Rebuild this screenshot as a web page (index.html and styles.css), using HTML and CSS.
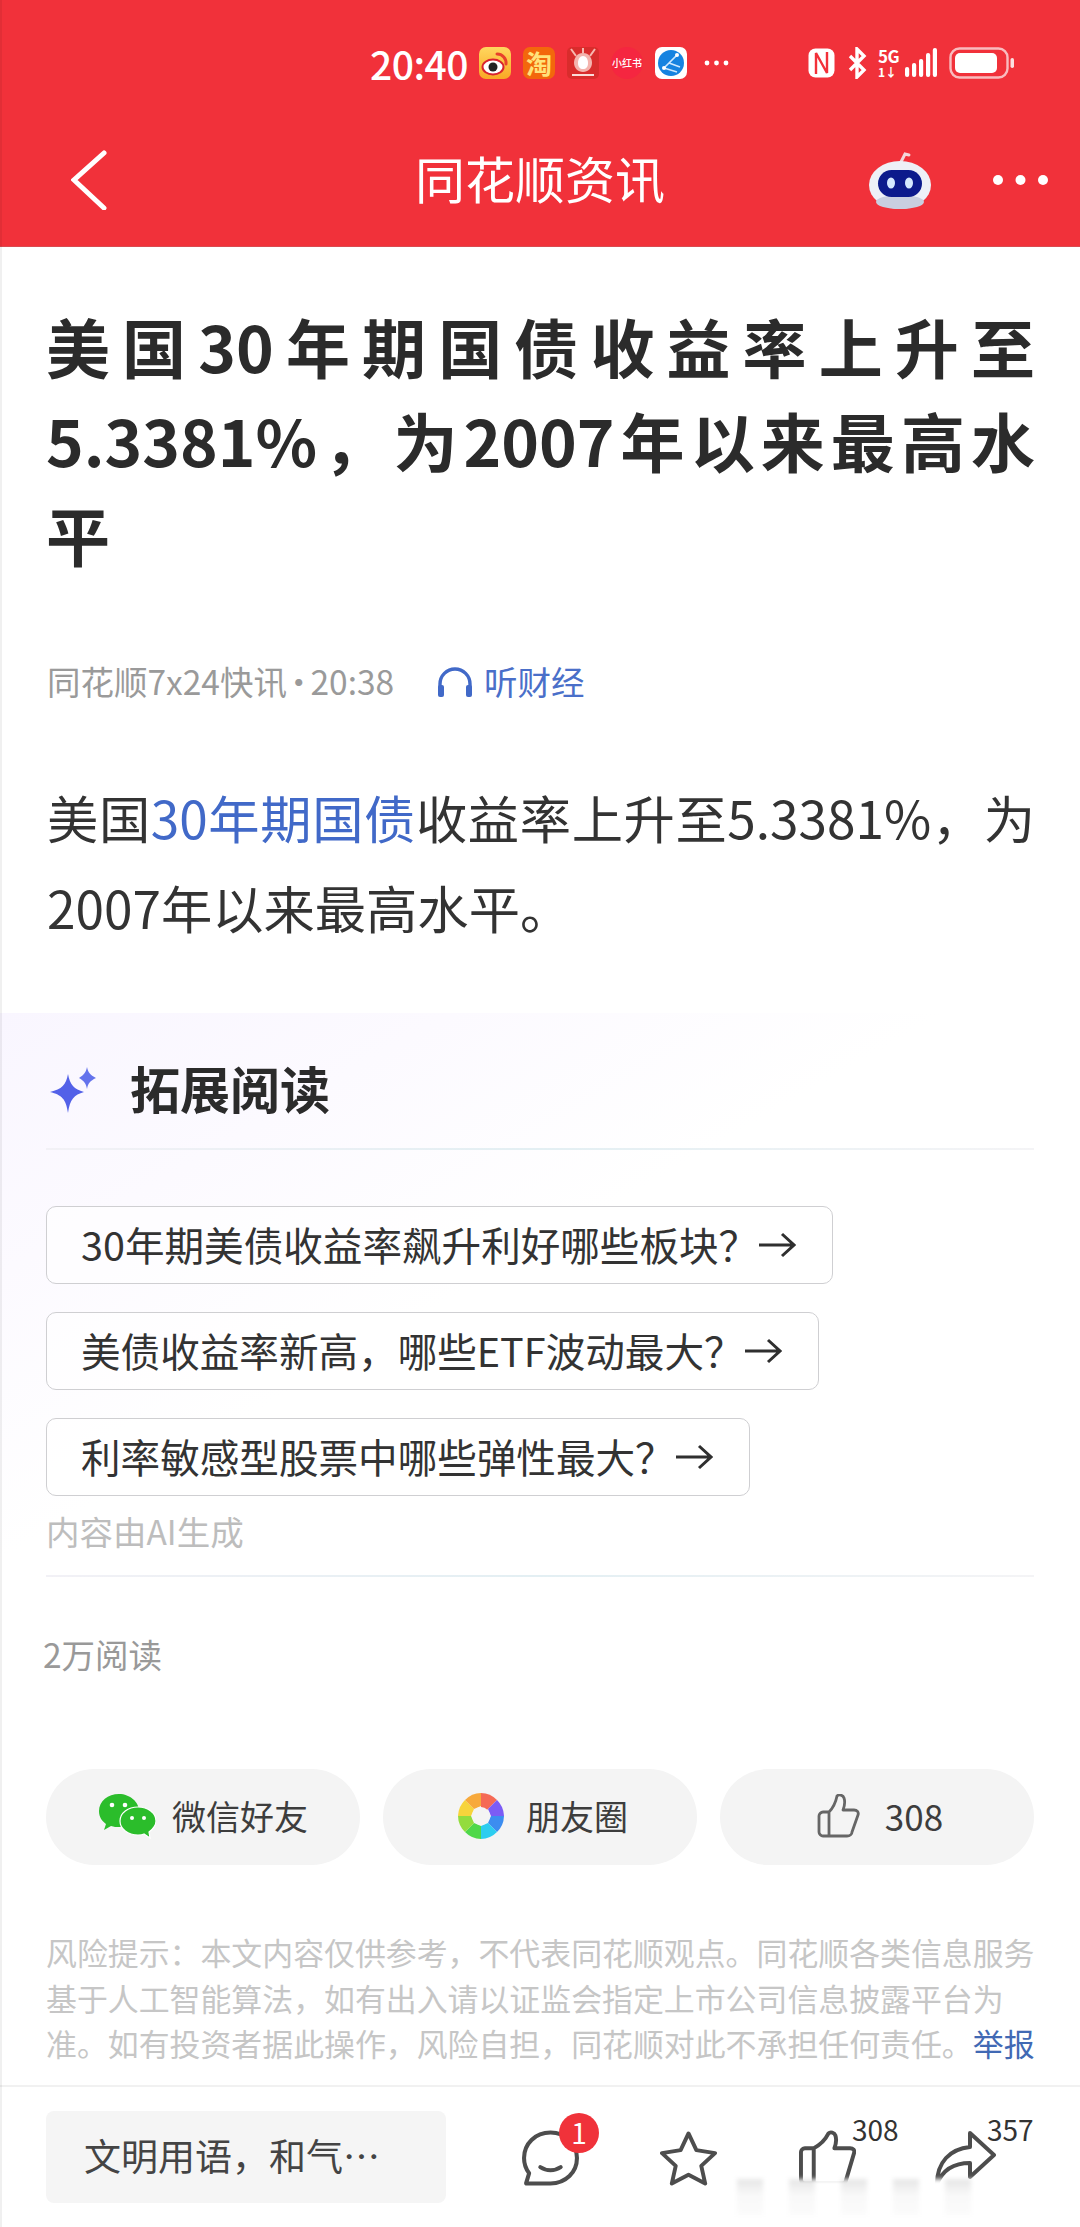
FILE: index.html
```
<!DOCTYPE html>
<html lang="zh-CN">
<head>
<meta charset="utf-8">
<title>同花顺资讯</title>
<link rel="stylesheet" href="styles.css">
</head>
<body>
<div class="page">
  <header class="top">
    <div class="status">
      <span class="time">20:40</span>
      <div class="apps">
        <svg class="app" viewBox="0 0 32 32"><defs><linearGradient id="wb" x1="0" y1="0" x2="0" y2="1"><stop offset="0" stop-color="#ffd75e"/><stop offset="1" stop-color="#f9a825"/></linearGradient></defs><rect width="32" height="32" rx="7" fill="url(#wb)"/><ellipse cx="14" cy="20" rx="10.5" ry="7.5" fill="#fff"/><ellipse cx="14" cy="20" rx="10.5" ry="7.5" fill="none" stroke="#d9232e" stroke-width="2"/><circle cx="14" cy="20" r="4.5" fill="#222"/><path d="M18 7a9 9 0 0 1 9 10" fill="none" stroke="#e8412b" stroke-width="3" stroke-linecap="round"/></svg>
        <span class="app tao">淘</span>
        <svg class="app" viewBox="0 0 32 32"><rect width="32" height="32" rx="5" fill="#d92c2c"/><path d="M4 2l5 7M28 2l-5 7M16 1v5" stroke="#f7b8b0" stroke-width="2"/><path d="M16 6c6 0 9 5 9 10s-4 9-9 9-9-4-9-9 3-10 9-10z" fill="#f4b4ae"/><path d="M16 9c3 0 5 3 5 7s-2 6-5 6-5-2-5-6 2-7 5-7z" fill="#fff"/><rect x="5" y="27" width="22" height="2" fill="#fbdcd8"/></svg>
        <span class="app xhs">小红书</span>
        <svg class="app" viewBox="0 0 32 32"><rect width="32" height="32" rx="7" fill="#fff"/><circle cx="16" cy="16" r="13" fill="#1683e0"/><path d="M9 21L22 8M9 21l13 4M14 16l11 4" stroke="#cfe9ff" stroke-width="1.6" fill="none"/><circle cx="9" cy="21" r="2" fill="#fff"/><circle cx="22" cy="8" r="2" fill="#fff"/></svg>
        <svg class="more" viewBox="0 0 25 6"><circle cx="3" cy="3" r="2.4" fill="#fff"/><circle cx="12.5" cy="3" r="2.4" fill="#fff"/><circle cx="22" cy="3" r="2.4" fill="#fff"/></svg>
      </div>
      <div class="sys">
        <svg class="nfc" viewBox="0 0 29 32"><rect x="1.5" y="1.5" width="26" height="29" rx="7" fill="#fff"/><path d="M9 27V6l11 20V5" fill="none" stroke="#f23039" stroke-width="2.4"/></svg>
        <svg class="bt" viewBox="0 0 20 32"><path d="M3 9l14 14-7 7V2l7 7L3 23" fill="none" stroke="#fff" stroke-width="3.4"/></svg>
        <div class="net"><span class="g5">5G</span><span class="one">1↓</span></div>
        <svg class="sig" viewBox="0 0 32 32"><rect x="0" y="20" width="4.2" height="10" rx="2" fill="#fff"/><rect x="7" y="16" width="4.2" height="14" rx="2" fill="#fff"/><rect x="14" y="12" width="4.2" height="18" rx="2" fill="#fff"/><rect x="21" y="6" width="4.2" height="24" rx="2" fill="#fff"/><rect x="27.8" y="1" width="4.2" height="29" rx="2" fill="#fff"/></svg>
        <svg class="bat" viewBox="0 0 66 32"><rect x="1.5" y="1.5" width="57" height="29" rx="9" fill="none" stroke="#fbdfe0" stroke-width="2.4" opacity=".8"/><rect x="6" y="6" width="42" height="20" rx="5" fill="#fff"/><rect x="61.500" y="11" width="3.500" height="10" rx="1.700" fill="#fbdfe0"/></svg>
      </div>
    </div>
    <nav class="nav">
      <svg class="back" viewBox="0 0 36 60"><path d="M33 3L3 30l30 28" fill="none" stroke="#fff" stroke-width="5" stroke-linecap="round" stroke-linejoin="miter"/></svg>
      <h2 class="nav-title">同花顺资讯</h2>
      <svg class="robot" viewBox="0 0 64 60"><path d="M33 12l4-8 4 1" fill="none" stroke="#f3d7da" stroke-width="3" stroke-linecap="round"/><ellipse cx="32" cy="35" rx="31" ry="24" fill="#eef0f7"/><ellipse cx="32" cy="52" rx="24" ry="7" fill="#c9cfe0"/><rect x="10" y="20" width="44" height="27" rx="13.500" fill="#0c1a8c"/><ellipse cx="23" cy="33" rx="4" ry="5.500" fill="#d5e8ff"/><ellipse cx="41" cy="33" rx="4" ry="5.500" fill="#d5e8ff"/></svg>
      <svg class="nav-more" viewBox="0 0 57 12"><circle cx="6" cy="6" r="5" fill="#fff"/><circle cx="28.500" cy="6" r="5" fill="#fff"/><circle cx="51" cy="6" r="5" fill="#fff"/></svg>
    </nav>
  </header>

  <main class="content">
    <article class="article">
      <h1 class="headline">美国30年期国债收益率上升至5.3381%，为2007年以来最高水平</h1>
      <div class="meta">
        <span class="source">同花顺7x24快讯<span class="dot">·</span>20:38</span>
        <svg class="phones" viewBox="0 0 36 32"><path d="M3 28V18a15 15 0 0 1 30 0v10" fill="none" stroke="#4169c8" stroke-width="3.4"/><rect x="1" y="19" width="6" height="12" rx="2" fill="#4169c8"/><rect x="29" y="19" width="6" height="12" rx="2" fill="#4169c8"/></svg>
        <span class="listen">听财经</span>
      </div>
      <p class="body-text">美国<span class="link">30年期国债</span>收益率上升至5.3381%，为2007年以来最高水平。</p>
    </article>

    <section class="extended">
      <div class="ext-head">
        <svg class="spark" viewBox="0 0 46 46"><path d="M18 7c2 11 6 15 16 18-10 3-14 7-16 21-2-14-6-18-18-21C12 22 16 18 18 7z" fill="#5361e8"/><path d="M37 0c1 5 3 8 9 11-6 3-8 5-9 11-1-6-3-8-8-11 5-3 7-6 8-11z" fill="#6473ec"/></svg>
        <h3 class="ext-title">拓展阅读</h3>
      </div>
      <div class="rule"></div>
      <ul class="chips">
        <li class="chip">30年期美债收益率飙升利好哪些板块？<svg class="arrow" viewBox="0 0 38 26"><path d="M1 13h34M24 2l12 11-12 11" fill="none" stroke="#2f2f2f" stroke-width="3"/></svg></li>
        <li class="chip">美债收益率新高，哪些ETF波动最大？<svg class="arrow" viewBox="0 0 38 26"><path d="M1 13h34M24 2l12 11-12 11" fill="none" stroke="#2f2f2f" stroke-width="3"/></svg></li>
        <li class="chip">利率敏感型股票中哪些弹性最大？<svg class="arrow" viewBox="0 0 38 26"><path d="M1 13h34M24 2l12 11-12 11" fill="none" stroke="#2f2f2f" stroke-width="3"/></svg></li>
      </ul>
      <div class="ai-note">内容由AI生成</div>
      <div class="rule rule-low"></div>
    </section>

    <div class="reads">2万阅读</div>

    <div class="actions">
      <button class="pill">
        <svg class="wx" viewBox="0 0 58 46"><path d="M21 1C10 1 1 8 1 18c0 6 3 10 7 13l-2 6 7-4c3 1 5 1 8 1 11 0 20-7 20-16S32 1 21 1z" fill="#2bbd2b"/><path d="M40 14c-10 0-18 6-18 14s8 14 18 14c2 0 4 0 6-1l6 4-1-6c4-3 7-7 7-11 0-8-8-14-18-14z" fill="#2bbd2b" stroke="#fff" stroke-width="1.200"/><circle cx="14" cy="12" r="2.300" fill="#fff"/><circle cx="27" cy="12" r="2.300" fill="#fff"/><circle cx="34" cy="25" r="2" fill="#fff"/><circle cx="46" cy="25" r="2" fill="#fff"/></svg>
        <span>微信好友</span>
      </button>
      <button class="pill pill-moments">
        <svg class="iris" viewBox="0 0 46 46">
          <path d="M23 23L23 0A23 23 0 0 1 39 7L30 16z" fill="#f56a55"/>
          <path d="M30 16L39 7A23 23 0 0 1 46 23L33 23z" fill="#7b5cf5"/>
          <path d="M33 23L46 23A23 23 0 0 1 39 39L30 30z" fill="#3c8df0"/>
          <path d="M30 30L39 39A23 23 0 0 1 23 46L23 33z" fill="#2ccdf0"/>
          <path d="M23 33L23 46A23 23 0 0 1 7 39L16 30z" fill="#4fd84a"/>
          <path d="M16 30L7 39A23 23 0 0 1 0 23L13 23z" fill="#93dc3e"/>
          <path d="M13 23L0 23A23 23 0 0 1 7 7L16 16z" fill="#f7d43c"/>
          <path d="M16 16L7 7A23 23 0 0 1 23 0L23 13z" fill="#f7a93b"/>
          <circle cx="23" cy="23" r="9" fill="#f4f4f4"/>
        </svg>
        <span>朋友圈</span>
      </button>
      <button class="pill pill-like">
        <svg class="thumb-sm" viewBox="0 0 44 44"><path d="M12 18h-6c-2 0-4 2-4 4v16c0 2 2 4 4 4h24c3 0 5-2 5-4l6-17c1-3-1-5-4-5H26c2-5 2-9 1-12-1-3-5-4-7-2-1 5-3 11-8 16zM12 18v24" fill="none" stroke="#666" stroke-width="2.800" stroke-linejoin="round"/></svg>
        <span class="like-num">308</span>
      </button>
    </div>

    <p class="risk">风险提示：本文内容仅供参考，不代表同花顺观点。同花顺各类信息服务基于人工智能算法，如有出入请以证监会指定上市公司信息披露平台为准。如有投资者据此操作，风险自担，同花顺对此不承担任何责任。<span class="report">举报</span></p>
  </main>

  <footer class="bar">
    <div class="input">文明用语，和气…</div>
    <div class="tool tool-comment">
      <svg class="tool-icon" viewBox="0 0 56 54"><path d="M28 2C13 2 2 13 2 27c0 6 2 11 5 15l-3 10h24c15 0 26-11 26-25S43 2 28 2z" fill="none" stroke="#4d4d4d" stroke-width="4" stroke-linejoin="round"/><path d="M18 36c6 4 14 4 20 0" fill="none" stroke="#4d4d4d" stroke-width="4" stroke-linecap="round"/></svg>
      <span class="badge">1</span>
    </div>
    <div class="tool tool-star">
      <svg class="tool-icon" viewBox="0 0 58 56"><path d="M29 3l8 17 19 3-14 13 4 18-17-9-17 9 4-18L2 23l19-3z" fill="none" stroke="#4d4d4d" stroke-width="4" stroke-linejoin="round"/></svg>
    </div>
    <div class="tool tool-thumb">
      <svg class="tool-icon" viewBox="0 0 58 56"><path d="M15 18H6c-2 0-4 2-4 4v28c0 2 2 4 4 4h38c2 0 4-2 4-4l8-27c1-3-1-5-4-5H36c2-5 2-10 1-13-1-3-5-4-7-2-3 6-7 11-15 15zM15 18v36" fill="none" stroke="#4d4d4d" stroke-width="4" stroke-linejoin="round"/></svg>
      <span class="count">308</span>
    </div>
    <div class="tool tool-share">
      <svg class="tool-icon tool-icon-wide" viewBox="0 0 62 56"><path d="M36 3l24 22-24 22V33C20 33 9 39 3 54c0-22 13-35 33-37z" fill="none" stroke="#4d4d4d" stroke-width="4" stroke-linejoin="round"/></svg>
      <span class="count">357</span>
    </div>
    <div class="smudge"></div>
  </footer>
  <div class="edge"></div>
</div>
</body>
</html>
```
FILE: styles.css
```
* { box-sizing: border-box; }
html, body { margin: 0; padding: 0; }
body { background: #fff; font-family: "Noto Sans CJK SC", "Noto Sans", sans-serif; color: #333; }
.page { position: relative; width: 1080px; height: 2227px; overflow: hidden; display: flex; flex-direction: column; background: #fff; }
.edge { position: absolute; left: 0; top: 0; width: 2px; height: 100%; background: rgba(0,0,0,.06); }

.top { background: #f1313a; height: 247px; flex: none; border-bottom: 1px solid #d94a50; }
.status { height: 126px; display: flex; align-items: center; padding-left: 370px; color: #fff; }
.time { font-size: 39px; font-weight: 500; width: 109px; letter-spacing: -.5px; }
.apps { display: flex; align-items: center; gap: 12px; width: 328px; }
.app { width: 32px; height: 32px; flex: none; display: block; }
.tao { background: #f3670c; border-radius: 7px; color: #ffe27a; font-size: 26px; line-height: 32px; text-align: center; font-weight: 700; }
.xhs { background: #f52640; border-radius: 50%; color: #fff; font-size: 10px; line-height: 32px; text-align: center; white-space: nowrap; overflow: hidden; font-weight: 500; }
.more { width: 25px; height: 6px; margin-left: 5px; }
.sys { display: flex; align-items: center; }
.nfc { width: 29px; height: 32px; margin-right: 11px; }
.bt { width: 20px; height: 32px; margin-right: 11px; }
.net { width: 24px; height: 32px; margin-right: 3px; display: flex; flex-direction: column; line-height: 1; font-weight: 700; }
.g5 { font-size: 17px; line-height: 18px; letter-spacing: -.5px; }
.one { font-size: 12px; line-height: 14px; }
.sig { width: 32px; height: 32px; margin-right: 12px; }
.bat { width: 66px; height: 32px; }

.nav { height: 108px; display: flex; align-items: center; position: relative; color: #fff; }
.back { width: 36px; height: 60px; margin-left: 71px; flex: none; }
.nav-title { margin: -6px 0 0 308px; font-size: 50px; font-weight: 400; line-height: 60px; width: 250px; white-space: nowrap; }
.robot { width: 64px; height: 60px; margin-left: 203px; flex: none; }
.nav-more { width: 57px; height: 12px; margin-left: 60px; flex: none; }

.content { flex: 1; min-height: 0; }
.article { padding: 0 45px 0 47px; }
.headline { margin: 51px 0 0 -1px; font-size: 64px; line-height: 94px; font-weight: 700; color: #2b2b2b; text-align: justify; }
.meta { display: flex; align-items: center; margin-top: 82px; height: 40px; font-size: 33.500px; line-height: 40px; }
.source { color: #9a9a9a; width: 390px; white-space: nowrap; margin-top: -3px; }
.dot { margin: 0 -5px; }
.phones { width: 36px; height: 32px; flex: none; }
.listen { color: #4a6fc9; margin-left: 11px; margin-top: -3px; }
.body-text { margin: 70px 0 0; font-size: 51.300px; line-height: 90px; color: #333; text-align: justify; }
.link { color: #4169c8; }

.extended { margin-top: 61px; padding: 47px 46px 0; background: linear-gradient(150deg, #f9f6ff 0, #fcfaff 22%, #fff 46%); }
.ext-head { display: flex; align-items: center; height: 60px; }
.spark { width: 46px; height: 46px; margin-left: 4px; flex: none; }
.ext-title { margin: -7px 0 0 34px; font-size: 50px; font-weight: 700; line-height: 60px; color: #2b2b2b; }
.rule { height: 2px; margin-top: 28px; background: linear-gradient(90deg, #f2f1f6, #e3eff3 50%, #f4f4f6); }
.chips { list-style: none; margin: 56px 0 0; padding: 0; display: flex; flex-direction: column; align-items: flex-start; gap: 28px; }
.chip { height: 78px; display: flex; align-items: center; gap: 0; padding: 0 36px 4px 34px; border: 1px solid #cfcfd2; border-radius: 10px; font-size: 39.600px; color: #333; background: rgba(255,255,255,.6); white-space: nowrap; }
.arrow { width: 38px; height: 26px; flex: none; margin-top: 4px; }
.ai-note { margin-top: 15px; font-size: 33.500px; line-height: 40px; color: #bdbdbd; }
.rule-low { margin-top: 24px; }

.reads { margin: 57px 0 0 43px; font-size: 33.500px; line-height: 40px; color: #999; }
.actions { margin: 95px 46px 0; display: grid; grid-template-columns: repeat(3, 314px); gap: 23px; }
.pill { height: 96px; border: 0; border-radius: 48px; background: #f4f4f4; display: flex; align-items: center; justify-content: center; gap: 16px; font: inherit; font-size: 34px; color: #3d3d3d; padding: 0 0 3px; }
.wx { width: 58px; height: 46px; }
.iris { width: 46px; height: 46px; flex: none; }
.pill-moments { gap: 22px; padding-left: 6px; }
.pill-like { gap: 24px; padding-left: 6px; }
.like-num { font-size: 35px; }
.thumb-sm { width: 44px; height: 44px; }

.risk { margin: 64px 44px 0 46px; font-size: 30.900px; line-height: 45.500px; color: #c6c6c6; }
.report { color: #4169b4; }

.bar { flex: none; height: 142px; border-top: 2px solid #f1f1f1; position: relative; display: flex; align-items: center; padding-left: 46px; }
.input { width: 400px; height: 92px; margin-top: 0; border-radius: 8px; background: #f5f5f5; padding: 0 0 4px 38px; font-size: 37px; line-height: 88px; color: #444; }
.tool { position: relative; flex: none; height: 56px; margin-top: 2px; }
.tool-icon { width: 57px; height: 56px; display: block; }
.tool-icon-wide { width: 62px; }
.tool-comment { margin-left: 76px; }
.tool-star { margin-left: 81px; }
.tool-thumb { margin-left: 82px; }
.tool-share { margin-left: 78px; }
.badge { position: absolute; left: 37px; top: -17px; width: 40px; height: 40px; border-radius: 50%; background: #f0323a; color: #fff; font-size: 28px; line-height: 38px; text-align: center; }
.count { position: absolute; left: 53px; top: -18px; font-size: 28px; line-height: 34px; color: #333; }
.smudge { position: absolute; left: 723px; top: 92px; width: 255px; height: 36px; background: linear-gradient(180deg, rgba(255,255,255,0) 0, rgba(255,255,255,.75) 45%, rgba(255,255,255,.85) 100%), repeating-linear-gradient(90deg, #fff 0 14px, #e6e6e6 14px 40px, #fff 40px 52px); filter: blur(2px); }
```
